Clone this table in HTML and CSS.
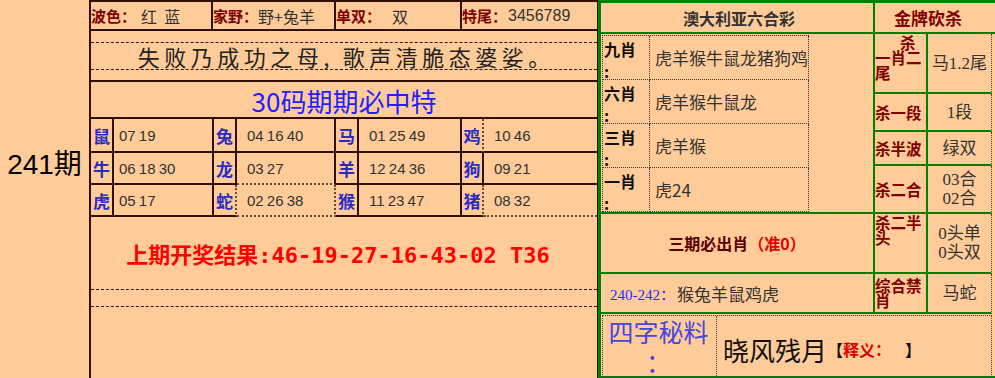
FILE: index.html
```html
<!DOCTYPE html>
<html lang="zh-CN">
<head>
<meta charset="utf-8">
<title>241期</title>
<link rel="stylesheet" href="styles.css">
</head>
<body>
<div class="page">
  <div class="period"><span class="period-text">241期</span></div>

  <div class="main">
    <div class="info">
      <div class="info-cell"><b class="lbl">波色：</b><span class="val v1">红&nbsp;&nbsp;蓝</span></div>
      <div class="info-cell"><b class="lbl">家野：</b><span class="val">野+兔羊</span></div>
      <div class="info-cell"><b class="lbl">单双：</b><span class="val v3">双</span></div>
      <div class="info-cell last"><b class="lbl">特尾：</b><span class="val num">3456789</span></div>
    </div>

    <div class="motto">
      <div class="motto-box">失败乃成功之母<span class="comma">,</span>歌声清脆态婆娑。</div>
    </div>

    <div class="slogan">30码期期必中特</div>

    <div class="zodiac">
      <div class="zc z-lbl">鼠</div><div class="zc z-num first">07 19</div>
      <div class="zc z-lbl">兔</div><div class="zc z-num">04 16 40</div>
      <div class="zc z-lbl">马</div><div class="zc z-num">01 25 49</div>
      <div class="zc z-lbl dr">鸡</div><div class="zc z-num end">10 46</div>

      <div class="zc z-lbl">牛</div><div class="zc z-num first">06 18 30</div>
      <div class="zc z-lbl">龙</div><div class="zc z-num db">03 27</div>
      <div class="zc z-lbl">羊</div><div class="zc z-num">12 24 36</div>
      <div class="zc z-lbl">狗</div><div class="zc z-num end">09 21</div>

      <div class="zc z-lbl">虎</div><div class="zc z-num first">05 17</div>
      <div class="zc z-lbl dr">蛇</div><div class="zc z-num dr db">02 26 38</div>
      <div class="zc z-lbl">猴</div><div class="zc z-num">11 23 47</div>
      <div class="zc z-lbl dr">猪</div><div class="zc z-num end db">08 32</div>
    </div>

    <div class="result">
      <div class="result-text">上期开奖结果:46-19-27-16-43-02 T36</div>
      <div class="result-dash"></div>
    </div>
  </div>

  <div class="side">
    <div class="s-title">澳大利亚六合彩</div>
    <div class="s-head">金牌砍杀</div>

    <div class="s-picks">
      <div class="picks">
        <div class="p-lbl">九肖<br>:</div><div class="p-val">虎羊猴牛鼠龙猪狗鸡</div>
        <div class="p-lbl">六肖<br>:</div><div class="p-val">虎羊猴牛鼠龙</div>
        <div class="p-lbl">三肖<br>:</div><div class="p-val">虎羊猴</div>
        <div class="p-lbl">一肖<br>:</div><div class="p-val">虎24</div>
      </div>
    </div>

    <div class="k-lbl top"><span class="stack"><span class="ind">杀</span><br>一肖二<br>尾</span></div>
    <div class="k-val">马1.2尾</div>

    <div class="k-lbl"><span>杀一段</span></div>
    <div class="k-val">1段</div>

    <div class="k-lbl"><span>杀半波</span></div>
    <div class="k-val">绿双</div>

    <div class="k-lbl"><span>杀二合</span></div>
    <div class="k-val"><span>03合<br>02合</span></div>

    <div class="s-must">三期必出肖<span class="must-red">（准0）</span></div>
    <div class="k-lbl top"><span class="stack">杀二半<br>头</span></div>
    <div class="k-val"><span>0头单<br>0头双</span></div>

    <div class="s-hist"><span class="hist-blue">240-242：</span>猴兔羊鼠鸡虎</div>
    <div class="k-lbl"><span class="stack">综合禁<br>肖</span></div>
    <div class="k-val">马蛇</div>

    <div class="s-secret">
      <div class="secret-box">
        <div class="sec-lbl">四字秘料<br>：</div>
        <div class="sec-val">晓风残月<span class="bk">【</span><span class="sec-red">释义：</span><span class="bk bk-end">】</span></div>
      </div>
    </div>
  </div>
</div>
</body>
</html>
```

FILE: styles.css
```css
* { box-sizing: border-box; }

body {
  margin: 0;
  background: #FFCC99;
  font-family: "Noto Sans CJK SC", sans-serif;
  color: #333;
}

.page {
  display: flex;
  width: 995px;
  height: 378px;
  overflow: hidden;
}

/* left period column */
.period {
  flex: none;
  width: 91px;
  border-right: 2px solid #301000;
  display: flex;
  justify-content: center;
  padding-top: 145px;
}
.period-text {
  font-family: "Liberation Sans", "Noto Sans CJK SC", sans-serif;
  font-size: 28px;
  line-height: 40px;
  height: 40px;
  color: #000;
}

/* main table */
.main {
  flex: none;
  width: 507px;
  border-right: 1px solid #301000;
  display: flex;
  flex-direction: column;
}

.info {
  display: grid;
  grid-template-columns: 122px 123px 126px 1fr;
  height: 31px;
  border-top: 2px solid #301000;
  border-bottom: 2px solid #301000;
}
.info-cell {
  border-right: 2px solid #301000;
  display: flex;
  align-items: center;
  white-space: nowrap;
  overflow: hidden;
}
.info-cell.last { border-right: none; }
.lbl {
  color: #800000;
  font-weight: bold;
  font-size: 15px;
}
.val {
  font-size: 16px;
  color: #333;
}
.v1 { margin-left: 5px; }
.v3 { margin-left: 11px; }
.num { font-family: "Liberation Sans", sans-serif; margin-left: 1px; }

.motto {
  height: 51px;
  border-bottom: 2px solid #301000;
  padding-top: 11px;
}
.motto-box {
  height: 28px;
  border-top: 1px dashed #301000;
  border-bottom: 1px dashed #301000;
  text-align: center;
  font-size: 22px;
  line-height: 26px;
  letter-spacing: 4.5px;
  padding-left: 4.5px;
  color: #222;
  white-space: nowrap;
}
.comma { margin-right: 9px; }

.slogan {
  height: 37px;
  border-bottom: 2px solid #301000;
  text-align: center;
  color: #1f1fff;
  font-size: 26px;
  line-height: 33px;
  padding-top: 2px;
  white-space: nowrap;
}

.zodiac {
  display: grid;
  grid-template-columns: 23px 100px 23px 99px 23px 103px 22px 1fr;
  grid-template-rows: 34px 32px 32px;
}
.zc {
  border-right: 2px solid #301000;
  border-bottom: 2px solid #301000;
  display: flex;
  align-items: center;
}
.zc.dr { border-right-style: dotted; border-right-color: #6a4a30; }
.zc.db { border-bottom-style: dotted; border-bottom-color: #6a4a30; }
.z-lbl {
  color: #2b2bc4;
  font-weight: bold;
  font-size: 17px;
  justify-content: center;
}
.z-num {
  font-family: "Liberation Sans", sans-serif;
  font-size: 15px;
  color: #333;
  padding-left: 10px;
  white-space: nowrap;
  word-spacing: -1px;
}
.z-num.first { padding-left: 5px; }
.z-num.end { border-right: none; }

.result {
  flex: 1;
  padding-top: 26px;
}
.result-text {
  color: #ff0000;
  font-weight: bold;
  font-size: 22px;
  line-height: 26px;
  text-align: center;
  font-family: "DejaVu Sans Mono", "Noto Sans CJK SC", monospace;
  padding-right: 12px;
  white-space: nowrap;
}
.result-dash {
  margin-top: 20px;
  height: 18px;
  border-top: 1px dashed #301000;
  border-bottom: 1px dashed #301000;
}

/* right panel */
.side {
  flex: none;
  width: 397px;
  height: 378px;
  border-left: 3px solid #008000;
  border-top: 3px solid #008000;
  border-bottom: 2px solid #008000;
  padding-right: 3px;
  display: grid;
  grid-template-columns: 274px 53px 1fr;
  grid-template-rows: 31px 60px 38px 34px 48px 60px 40px 1fr;
}

.s-title {
  grid-column: 1;
  border-right: 2px solid #008000;
  border-bottom: 2px solid #008000;
  display: flex;
  align-items: center;
  justify-content: center;
  font-weight: bold;
  font-size: 16px;
  color: #333;
  padding-left: 4px;
}
.s-head {
  grid-column: 2 / 4;
  margin-right: -3px;
  border-bottom: 2px solid #008000;
  display: flex;
  align-items: center;
  justify-content: center;
  padding-right: 14px;
  color: #800000;
  font-weight: bold;
  font-size: 17px;
}

.s-picks {
  grid-column: 1;
  grid-row: 2 / 6;
  border-right: 2px solid #008000;
  border-bottom: 2px solid #008000;
  padding: 1px 0 0 1px;
}
.picks {
  display: grid;
  grid-template-columns: 47px 159px;
  grid-auto-rows: 44px;
  width: 207px;
  border-top: 1px dotted #333;
  border-left: 1px dotted #333;
}
.p-lbl, .p-val {
  border-right: 1px dotted #333;
  border-bottom: 1px dotted #333;
}
.p-lbl {
  font-weight: bold;
  font-size: 16px;
  line-height: 22px;
  color: #111;
  padding: 2px 0 0 1px;
}
.p-val {
  font-size: 17px;
  display: flex;
  align-items: center;
  padding-left: 5px;
  color: #333;
  white-space: nowrap;
}

.k-lbl {
  color: #800000;
  font-weight: bold;
  font-size: 15.5px;
  line-height: 15px;
  border-right: 2px solid #008000;
  border-bottom: 2px solid #008000;
  display: flex;
  align-items: center;
  white-space: nowrap;
}
.k-lbl.top { align-items: flex-start; padding-top: 1px; }
.stack { display: block; }
.ind { padding-left: 25px; }

.k-val {
  font-family: "Liberation Serif", "Noto Sans CJK SC", serif;
  font-size: 17px;
  line-height: 19px;
  color: #333;
  text-align: center;
  display: flex;
  align-items: center;
  justify-content: center;
  border-right: 1px dotted #444;
  border-bottom: 2px solid #008000;
  white-space: nowrap;
}

.s-must {
  grid-column: 1;
  border-right: 2px solid #008000;
  border-bottom: 2px solid #008000;
  display: flex;
  align-items: center;
  justify-content: center;
  color: #5a0000;
  font-weight: bold;
  font-size: 16px;
  white-space: nowrap;
}
.must-red { color: #e00000; }

.s-hist {
  grid-column: 1;
  border-right: 2px solid #008000;
  border-bottom: 2px solid #008000;
  display: flex;
  align-items: center;
  padding-left: 9px;
  font-size: 17px;
  color: #333;
  white-space: nowrap;
}
.hist-blue {
  font-family: "Liberation Serif", "Noto Sans CJK SC", serif;
  font-size: 15px;
  color: #2a2aff;
  margin-right: 2px;
}

.s-secret {
  grid-column: 1 / 4;
  margin-right: -3px;
  padding: 1px 3px 1px 1px;
}
.secret-box {
  height: 100%;
  border: 1px dotted #444;
  display: grid;
  grid-template-columns: 114px 1fr;
}
.sec-lbl {
  border-right: 1px dotted #444;
  color: #4646e0;
  font-size: 25px;
  line-height: 30px;
  text-align: center;
  padding-right: 2px;
}
.sec-val {
  display: flex;
  align-items: center;
  padding: 6px 0 0 6px;
  font-size: 26px;
  color: #111;
  white-space: nowrap;
}
.bk {
  font-weight: bold;
  font-size: 16px;
  color: #111;
}
.bk-end { margin-left: 14px; }
.sec-red {
  color: #e00000;
  font-weight: bold;
  font-size: 16px;
}
```
